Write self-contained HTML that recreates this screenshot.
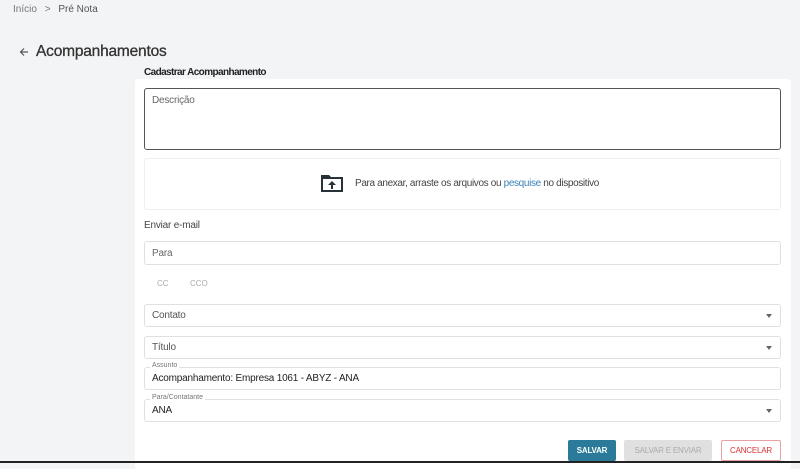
<!DOCTYPE html><html><head><style>
*{box-sizing:border-box;margin:0;padding:0}
body{width:800px;height:463px;overflow:hidden;background:#f3f4f6;font-family:"Liberation Sans",sans-serif;position:relative;color:#333}
.a{position:absolute}
.box{position:absolute;left:144px;width:637px;border:1px solid #e0e0e0;border-radius:3px;background:#fff}
.ph{position:absolute;left:7px;font-size:10px;color:#666;letter-spacing:-0.2px}
.car{position:absolute;right:8px;top:9px;width:0;height:0;border-left:3.5px solid transparent;border-right:3.5px solid transparent;border-top:4px solid #666}
.lbl{position:absolute;left:5px;top:-6px;background:#fff;padding:0 2px;font-size:7px;color:#777}
.btn{position:absolute;top:440px;height:21px;font-size:8px;font-weight:bold;display:flex;align-items:center;justify-content:center;border-radius:2px;letter-spacing:-0.2px}
</style></head><body>
<div class="a" style="left:13px;top:4px;font-size:10px;color:#777">Início <span style="margin:0 5px">&gt;</span> <span style="color:#555">Pré Nota</span></div>
<svg class="a" style="left:19px;top:47px" width="10" height="10" viewBox="0 0 10 10"><path d="M9 5H1.5M5 1.5L1.5 5L5 8.5" stroke="#555" stroke-width="1.2" fill="none"/></svg>
<div class="a" style="left:36px;top:43px;font-size:15.5px;color:#333;letter-spacing:-0.2px;-webkit-text-stroke:0.3px #333">Acompanhamentos</div>
<div class="a" style="left:144px;top:67px;font-size:10px;font-weight:bold;color:#222;letter-spacing:-0.6px">Cadastrar Acompanhamento</div>
<div class="a" style="left:135px;top:79px;width:656px;height:390px;background:#fff;border-radius:3px"></div>
<div class="box" style="top:88px;height:62px;border-color:#555"><div class="ph" style="top:6px">Descrição</div></div>
<div class="box" style="top:158px;height:52px;border-color:#eee">
<svg class="a" style="left:175px;top:14px" width="24" height="20" viewBox="0 0 24 20"><path d="M1 2h8l2 2h12v15H1z" fill="#263238"/><rect x="3" y="6" width="18" height="11" fill="#fff"/><path d="M12 8l-4 4h3v4h2v-4h3z" fill="#263238"/></svg>
<div class="a" style="left:210px;top:19px;font-size:10px;color:#444;letter-spacing:-0.35px">Para anexar, arraste os arquivos ou <span style="color:#3b82b6">pesquise</span> no dispositivo</div></div>
<div class="a" style="left:144px;top:220px;font-size:10px;color:#444;letter-spacing:-0.2px">Enviar e-mail</div>
<div class="box" style="top:241px;height:24px"><div class="ph" style="top:6px">Para</div></div>
<div class="a" style="left:157px;top:279px;font-size:8px;color:#aaa">CC</div>
<div class="a" style="left:190px;top:279px;font-size:8px;color:#aaa">CCO</div>
<div class="box" style="top:304px;height:23px"><div class="ph" style="top:5px;color:#555">Contato</div><div class="car"></div></div>
<div class="box" style="top:336px;height:23px"><div class="ph" style="top:5px;color:#555">Título</div><div class="car"></div></div>
<div class="box" style="top:367px;height:23px"><div class="lbl">Assunto</div><div class="ph" style="top:5px;color:#222">Acompanhamento: Empresa 1061 - ABYZ - ANA</div></div>
<div class="box" style="top:399px;height:23px"><div class="lbl">Para/Contatante</div><div class="ph" style="top:5px;color:#222">ANA</div><div class="car"></div></div>
<div class="btn" style="left:568px;width:48px;background:#2b7a99;color:#fff">SALVAR</div>
<div class="btn" style="left:624px;width:88px;background:#e0e0e0;color:#aaa;font-weight:normal">SALVAR E ENVIAR</div>
<div class="btn" style="left:721px;width:60px;border:1px solid #e8a0a0;color:#d33;background:#fff;font-weight:normal">CANCELAR</div>
<div class="a" style="left:0;top:461px;width:800px;height:2px;background:#222"></div>
</body></html>
